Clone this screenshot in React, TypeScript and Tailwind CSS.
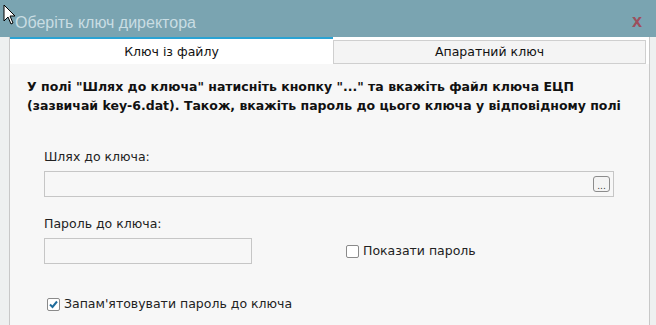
import { useState } from "react";

const ui = { fontFamily: '"DejaVu Sans", Verdana, sans-serif' };

const Checkbox = ({ checked, onChange }: { checked: boolean; onChange: () => void }) => (
  <button
    type="button"
    onClick={onChange}
    className="w-[13px] h-[13px] rounded-[2px] border border-[#8a8a8a] bg-white flex items-center justify-center shrink-0"
  >
    {checked && (
      <svg width="11" height="11" viewBox="0 0 11 11">
        <path d="M2 5.5 L4.5 8 L9 2.5" fill="none" stroke="#1f6c9c" strokeWidth="2" />
      </svg>
    )}
  </button>
);

export default function App() {
  const [tab, setTab] = useState(0);
  const [showPass, setShowPass] = useState(false);
  const [remember, setRemember] = useState(true);

  return (
    <div className="relative w-[656px] h-[325px] overflow-hidden bg-[#eef0f0]" style={ui}>
      {/* title bar */}
      <div className="h-[37px] bg-[#7aa4b1] flex items-center justify-between pl-[15px] pr-[14px] pt-[9px]">
        <span className="text-[16px] text-[#c9dde3]" style={{ fontFamily: '"Liberation Sans", Arial, sans-serif' }}>
          Оберіть ключ директора
        </span>
        <span
          className="text-[#9d4f5c] text-[18px] font-bold leading-none -mt-[4px]"
          style={{ fontFamily: '"Liberation Sans", Arial, sans-serif' }}
        >
          x
        </span>
      </div>

      {/* cursor */}
      <svg className="absolute left-[3px] top-[4px]" width="14" height="22" viewBox="0 0 14 22">
        <path d="M1 1 L1 17 L5 13 L8 20 L10 19 L7 12 L12 12 Z" fill="#fff" stroke="#000" strokeWidth="1" />
      </svg>

      <div className="ml-[9px] mr-[6px] h-[288px] border-l border-r border-[#c8c8c8] bg-[#f7f7f7] flex flex-col">
        {/* tabs */}
        <div className="flex h-[27px] bg-white">
          <button
            onClick={() => setTab(0)}
            className={`w-[323px] pt-[1px] text-[12.5px] text-[#111] border-t-2 ${tab === 0 ? "border-[#2aa3d3] bg-white" : "border-transparent bg-[#f4f4f4]"}`}
          >
            Ключ із файлу
          </button>
          <button
            onClick={() => setTab(1)}
            className={`flex-1 mt-[3px] mr-[3px] text-[12.5px] text-[#111] border border-[#cfcfcf] ${tab === 1 ? "bg-white" : "bg-[#f4f4f4]"}`}
          >
            Апаратний ключ
          </button>
        </div>

        <div className="flex flex-col pl-[17px] pt-[13px]">
          <p className="text-[12.5px] font-bold leading-[19px] text-[#111]">
            У полі "Шлях до ключа" натисніть кнопку "..." та вкажіть файл ключа ЕЦП
            <br />
            (зазвичай key-6.dat). Також, вкажіть пароль до цього ключа у відповідному полі
          </p>

          <div className="pl-[17px] mt-[34px] flex flex-col">
            <label className="text-[12.5px] text-[#222] leading-[16px]">Шлях до ключа:</label>
            <div className="mt-[6px] w-[570px] h-[26px] border border-[#c6c6c6] bg-[#f7f7f7] flex items-center justify-end pr-[3px]">
              <button className="w-[17px] h-[16px] border border-[#8c8c8c] rounded-[3px] bg-[#f4f4f4] flex items-end justify-center pb-[2px]">
                <span className="text-[9px] leading-[6px] text-[#333]">...</span>
              </button>
            </div>

            <label className="mt-[19px] text-[12.5px] text-[#222] leading-[16px]">Пароль до ключа:</label>
            <div className="mt-[6px] flex items-center">
              <input
                type={showPass ? "text" : "password"}
                className="w-[208px] h-[26px] border border-[#c6c6c6] bg-[#f7f7f7] outline-none"
              />
              <label className="ml-[94px] flex items-center gap-[4px] text-[12.5px] text-[#222]">
                <Checkbox checked={showPass} onChange={() => setShowPass(!showPass)} />
                Показати пароль
              </label>
            </div>

            <label className="mt-[31px] ml-[3px] flex items-center gap-[4px] text-[12.5px] text-[#222]">
              <Checkbox checked={remember} onChange={() => setRemember(!remember)} />
              Запам'ятовувати пароль до ключа
            </label>
          </div>
        </div>
      </div>
    </div>
  );
}
